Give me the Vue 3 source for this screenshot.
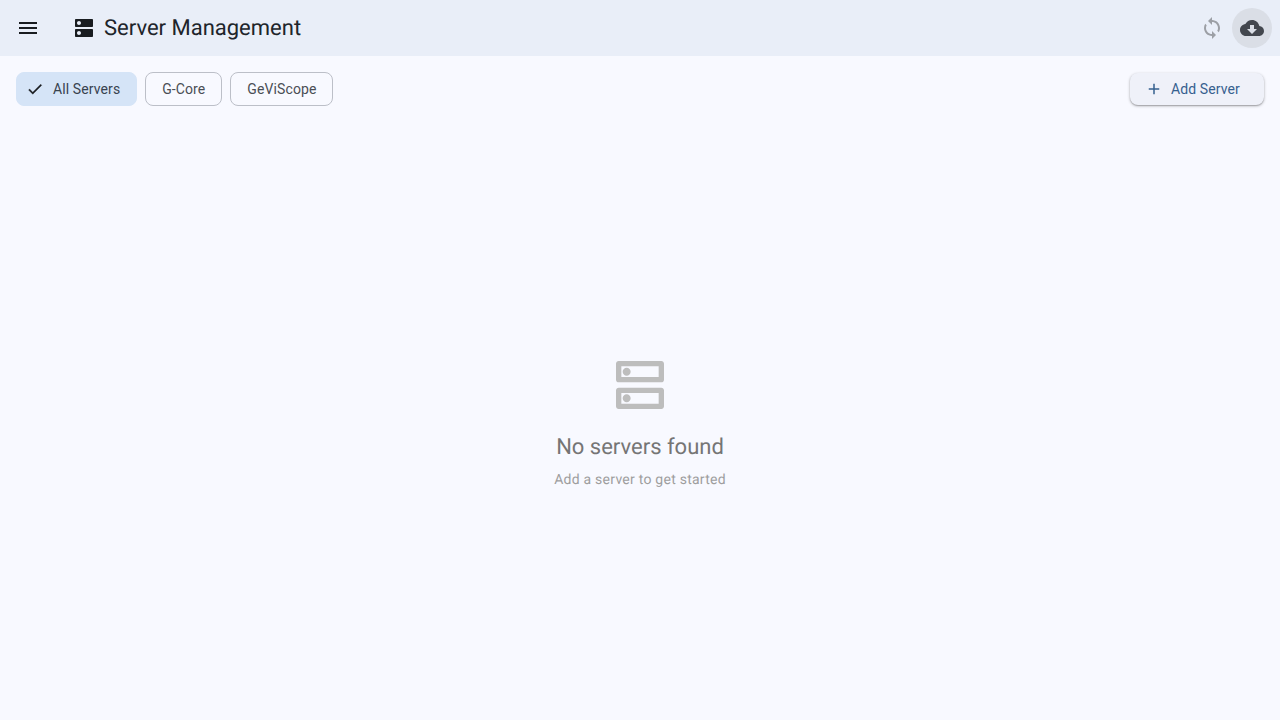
<script setup>
const chips = [
  { label: 'All Servers', selected: true },
  { label: 'G-Core', selected: false },
  { label: 'GeViScope', selected: false },
]
</script>

<template>
  <div class="page">
    <header class="appbar">
      <button class="icon-btn menu" aria-label="Menu">
        <svg class="i24" viewBox="0 0 24 24"><path d="M3 18h18v-2H3v2zm0-5h18v-2H3v2zm0-7v2h18V6H3z" /></svg>
      </button>
      <div class="title-wrap">
        <svg class="i24" viewBox="0 0 24 24"><path d="M20 13H4c-.55 0-1 .45-1 1v6c0 .55.45 1 1 1h16c.55 0 1-.45 1-1v-6c0-.55-.45-1-1-1zM7 19c-1.1 0-2-.9-2-2s.9-2 2-2 2 .9 2 2-.9 2-2 2zM20 3H4c-.55 0-1 .45-1 1v6c0 .55.45 1 1 1h16c.55 0 1-.45 1-1V4c0-.55-.45-1-1-1zM7 9c-1.1 0-2-.9-2-2s.9-2 2-2 2 .9 2 2-.9 2-2 2z" /></svg>
        <h1 class="title">Server Management</h1>
      </div>
      <div class="actions">
        <button class="icon-btn sync" aria-label="Sync">
          <svg class="i24" viewBox="0 0 24 24"><path d="M12 4V1L8 5l4 4V6c3.31 0 6 2.69 6 6 0 1.01-.25 1.97-.7 2.8l1.46 1.46C19.54 15.03 20 13.57 20 12c0-4.42-3.58-8-8-8zm0 14c-3.31 0-6-2.69-6-6 0-1.01.25-1.97.7-2.8L5.24 7.74C4.46 8.97 4 10.43 4 12c0 4.42 3.58 8 8 8v3l4-4-4-4v3z" /></svg>
        </button>
        <button class="icon-btn cloud" aria-label="Download">
          <svg class="i24" viewBox="0 0 24 24"><path d="M19.35 10.04C18.67 6.59 15.64 4 12 4 9.11 4 6.6 5.64 5.35 8.04 2.34 8.36 0 10.91 0 14c0 3.31 2.69 6 6 6h13c2.76 0 5-2.24 5-5 0-2.64-2.05-4.78-4.65-4.96zM17 13l-5 5-5-5h3V9h4v4h3z" /></svg>
        </button>
      </div>
    </header>

    <section class="toolbar">
      <div class="chips">
        <button v-for="c in chips" :key="c.label" class="chip" :class="{ selected: c.selected }">
          <svg v-if="c.selected" class="i18 check" viewBox="0 0 24 24"><path d="M9 16.17L4.83 12l-1.41 1.41L9 19 21 7l-1.41-1.41z" /></svg>
          <span>{{ c.label }}</span>
        </button>
      </div>
      <button class="add">
        <svg class="i18" viewBox="0 0 24 24"><path d="M19 13h-6v6h-2v-6H5v-2h6V5h2v6h6v2z" /></svg>
        <span>Add Server</span>
      </button>
    </section>

    <main class="empty">
      <svg class="i64" viewBox="0 0 24 24"><path d="M19 15v4H5v-4h14m1-2H4c-.55 0-1 .45-1 1v6c0 .55.45 1 1 1h16c.55 0 1-.45 1-1v-6c0-.55-.45-1-1-1zM7 18.5c-.82 0-1.5-.67-1.5-1.5s.68-1.5 1.5-1.5 1.5.67 1.5 1.5-.67 1.5-1.5 1.5zM19 5v4H5V5h14m1-2H4c-.55 0-1 .45-1 1v6c0 .55.45 1 1 1h16c.55 0 1-.45 1-1V4c0-.55-.45-1-1-1zM7 8.5c-.82 0-1.5-.67-1.5-1.5S6.18 5.5 7 5.5s1.5.68 1.5 1.5S7.83 8.5 7 8.5z" /></svg>
      <h2 class="empty-title">No servers found</h2>
      <p class="empty-sub">Add a server to get started</p>
    </main>
  </div>
</template>

<style>
html, body { margin: 0; background: #f8f9ff; }
</style>

<style scoped>
.page {
  width: 1280px;
  height: 720px;
  display: flex;
  flex-direction: column;
  background: #f8f9ff;
  color: #191c20;
  font-family: Roboto, "Liberation Sans", sans-serif;
  overflow: hidden;
  text-rendering: geometricPrecision;
  will-change: opacity;
}
button {
  font-family: inherit;
  border: 0;
  background: none;
  padding: 0;
  cursor: pointer;
}
svg { display: block; fill: currentColor; flex: none; }
.i24 { width: 24px; height: 24px; }
.i18 { width: 18px; height: 18px; }
.i64 { width: 64px; height: 64px; }

.appbar {
  height: 56px;
  flex: none;
  display: flex;
  align-items: center;
  background: #e9eef8;
  padding: 0 8px 0 4px;
}
.icon-btn {
  width: 40px;
  height: 40px;
  border-radius: 50%;
  display: flex;
  align-items: center;
  justify-content: center;
  color: #191c20;
}
.menu { width: 48px; height: 48px; }
.title-wrap {
  display: flex;
  align-items: center;
  gap: 8px;
  margin-left: 20px;
}
.title {
  margin: 2px 0 0;
  font-size: 22px;
  font-weight: 400;
  line-height: 28px;
  color: #20242a;
}
.actions { display: flex; margin-left: auto; }
.sync { color: #9c9fa5; }
.cloud { background: #dadee6; color: #43474e; }

.toolbar {
  display: flex;
  justify-content: space-between;
  align-items: center;
  padding: 16px 16px 0;
}
.chips { display: flex; gap: 8px; }
.chip {
  height: 34px;
  box-sizing: border-box;
  display: flex;
  align-items: center;
  padding: 0 16px;
  border: 1px solid #bcbfc8;
  border-radius: 8px;
  font-size: 14px;
  letter-spacing: 0.1px;
  color: #4a4e55;
}
.chip.selected {
  background: #d5e4f7;
  border-color: #d5e4f7;
  color: #38424f;
  padding: 0 16px 0 9px;
  gap: 9px;
}
.check { color: #191c20; stroke: #191c20; stroke-width: 0.4px; }
.add {
  width: 134px;
  height: 32px;
  display: flex;
  align-items: center;
  gap: 8px;
  padding: 0 0 0 15px;
  border-radius: 8px;
  background: #eff1f9;
  color: #36608f;
  font-size: 14px;
  letter-spacing: 0.1px;
  box-shadow: 0 1px 3px rgba(0, 0, 0, 0.3), 0 1px 1px rgba(0, 0, 0, 0.15);
}

.empty {
  flex: 1;
  display: flex;
  flex-direction: column;
  align-items: center;
  padding-top: 247px;
}
.i64 { color: #bdbdbd; }
.empty-title {
  margin: 17px 0 0;
  font-size: 22px;
  font-weight: 400;
  line-height: 28px;
  color: #757575;
}
.empty-sub {
  margin: 8px 0 0;
  font-size: 14px;
  line-height: 20px;
  letter-spacing: 0.25px;
  color: #9e9e9e;
}
</style>
